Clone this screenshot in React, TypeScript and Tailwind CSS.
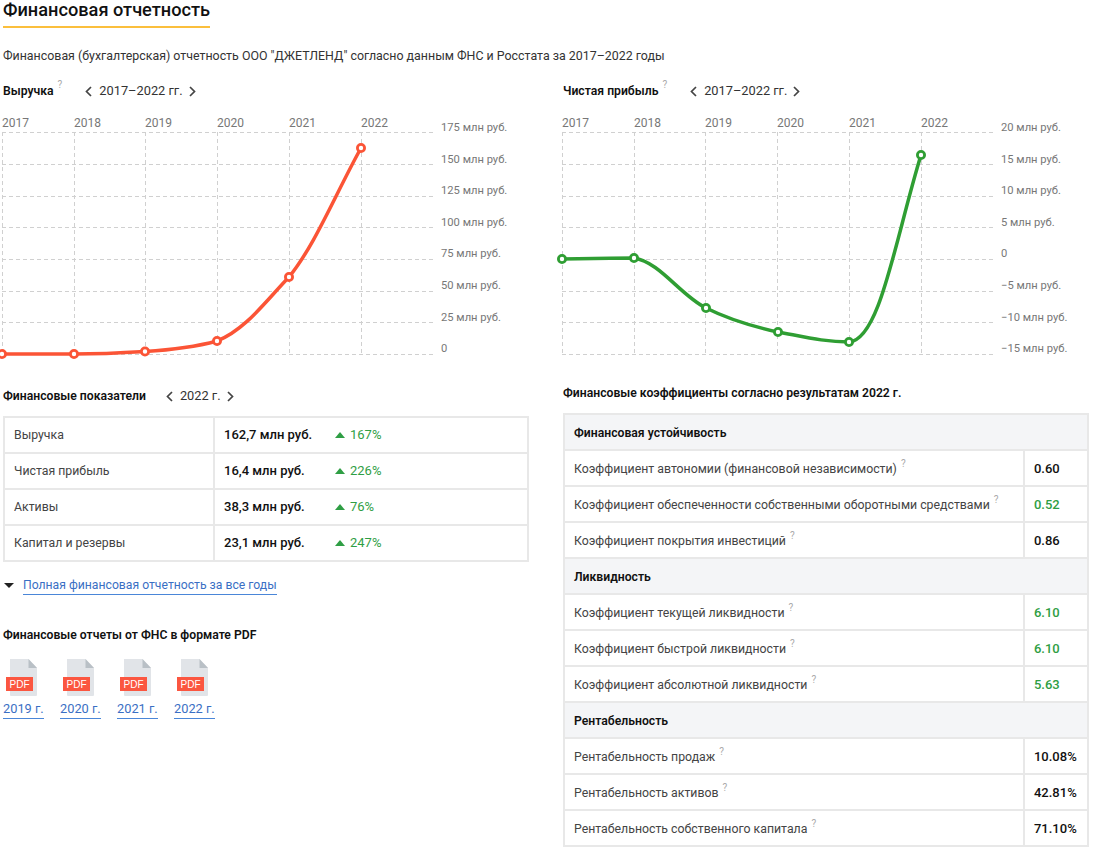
const font = { fontFamily: 'Roboto, sans-serif' }

const Q = () => <sup className="ml-1 text-[10px] font-normal text-[#aaa] top-[-6px]">?</sup>

function Chevron({ dir }: { dir: 'l' | 'r' }) {
  return (
    <svg width="7" height="11" viewBox="0 0 7 11" className={dir === 'l' ? 'mr-[7px]' : 'ml-[6px]'}>
      <path d={dir === 'l' ? 'M6 1 1.500 5.500 6 10' : 'M1 1l4.500 4.500L1 10'} fill="none" stroke="#444" strokeWidth="1.7" />
    </svg>
  )
}

function Switcher({ label }: { label: string }) {
  return (
    <div className="flex items-center text-[12.8px] text-[#333]">
      <Chevron dir="l" />
      <span>{label}</span>
      <Chevron dir="r" />
    </div>
  )
}

const years = ['2017', '2018', '2019', '2020', '2021', '2022']

function Chart({ labels, line, color, points }: { labels: string[]; line: string; color: string; points: number[][] }) {
  const xs = [2, 74, 145, 217, 289, 361]
  const ys = [132, 164, 196, 227, 259, 291, 322, 354]
  return (
    <svg width="526" height="240" viewBox="0 115 526 240" className="block overflow-visible">
      {xs.map((x) => (
        <line key={x} x1={x} x2={x} y1="132" y2="354" stroke="#d0d0d0" strokeDasharray="4 3" shapeRendering="crispEdges" />
      ))}
      {ys.map((y) => (
        <line key={y} x1="2" x2="433" y1={y} y2={y} stroke="#d0d0d0" strokeDasharray="4 3" shapeRendering="crispEdges" />
      ))}
      {years.map((y, i) => (
        <text key={y} x={xs[i]} y="127" fontSize="12" fill="#777">{y}</text>
      ))}
      {labels.map((l, i) => (
        <text key={l} x="441" y={131 + i * 31.6} fontSize="11.2" fill="#777">{l}</text>
      ))}
      <path d={line} fill="none" stroke={color} strokeWidth="3.5" />
      {points.map(([x, y]) => (
        <circle key={x} cx={x} cy={y} r="3.6" fill="#fff" stroke={color} strokeWidth="2.8" />
      ))}
    </svg>
  )
}

const revenue = [
  ['Выручка', '162,7 млн руб.', '167%'],
  ['Чистая прибыль', '16,4 млн руб.', '226%'],
  ['Активы', '38,3 млн руб.', '76%'],
  ['Капитал и резервы', '23,1 млн руб.', '247%'],
]

const ratios: { title: string; rows: [string, string, boolean][] }[] = [
  {
    title: 'Финансовая устойчивость',
    rows: [
      ['Коэффициент автономии (финансовой независимости)', '0.60', false],
      ['Коэффициент обеспеченности собственными оборотными средствами', '0.52', true],
      ['Коэффициент покрытия инвестиций', '0.86', false],
    ],
  },
  {
    title: 'Ликвидность',
    rows: [
      ['Коэффициент текущей ликвидности', '6.10', true],
      ['Коэффициент быстрой ликвидности', '6.10', true],
      ['Коэффициент абсолютной ликвидности', '5.63', true],
    ],
  },
  {
    title: 'Рентабельность',
    rows: [
      ['Рентабельность продаж', '10.08%', false],
      ['Рентабельность активов', '42.81%', false],
      ['Рентабельность собственного капитала', '71.10%', false],
    ],
  },
]

function PdfIcon() {
  return (
    <svg width="36" height="38" viewBox="0 0 36 38" className="block">
      <path d="M4 0h18.500L31 9v27a1 1 0 0 1-1 1H5a1 1 0 0 1-1-1z" fill="#e1e4e8" />
      <path d="M22.500 0 31 9h-8.500z" fill="#b9c0c6" />
      <rect x="0" y="18" width="27" height="14" fill="#fb5640" />
      <text x="13.500" y="28.700" textAnchor="middle" fontSize="10" fontFamily="Liberation Sans, sans-serif" fill="#fff">PDF</text>
    </svg>
  )
}

export default function App() {
  return (
    <div style={font} className="h-[854px] w-[1094px] overflow-hidden bg-white text-[12.3px] text-[#444]">
      <div className="pl-[3px]">
        <h1 className="inline-block border-b-2 border-[#fbbf3c] pb-[7px] text-[18.2px] leading-[19px] font-medium text-[#111]">Финансовая отчетность</h1>
      </div>
      <p className="mt-[20px] pl-[3px] text-[12.4px] leading-[16px] text-[#333]">Финансовая (бухгалтерская) отчетность ООО "ДЖЕТЛЕНД" согласно данным ФНС и Росстата за 2017–2022 годы</p>
      <div className="mt-[18px] grid grid-cols-[526px_526px] gap-x-[34px] pl-[3px]">
        <div>
          <div className="flex h-[18px] items-center">
            <b className="text-[12.2px] font-semibold text-[#111]">Выручка</b><Q />
            <div className="ml-[23px]"><Switcher label="2017–2022 гг." /></div>
          </div>
          <div className="-ml-[3px] mt-[15px]">
            <Chart
              color="#fb5436"
              labels={['175 млн руб.', '150 млн руб.', '125 млн руб.', '100 млн руб.', '75 млн руб.', '50 млн руб.', '25 млн руб.', '0']}
              line="M2 354C30 354 50 354 74 354C100 354 120 353 145 351.500C170 350 195 347 217 341C245 330 265 302 289 277C315 245 335 195 361 148"
              points={[[2, 354], [74, 354], [145, 351.500], [217, 341], [289, 277], [361, 148]]}
            />
          </div>
          <div className="mt-[32px] flex h-[18px] items-center">
            <b className="text-[12.2px] font-semibold text-[#111]">Финансовые показатели</b>
            <div className="ml-[20px]"><Switcher label="2022 г." /></div>
          </div>
          <table className="mt-[11px] w-[526px] table-fixed border-collapse border-2 border-[#e8e8e8]">
            <colgroup><col className="w-[210px]" /><col /></colgroup>
            <tbody>
              {revenue.map(([a, b, c]) => (
                <tr key={a} className="h-[36px] border-b-2 border-[#e8e8e8]">
                  <td className="border-r-2 border-[#e8e8e8] pl-[9px]">{a}</td>
                  <td>
                    <div className="flex items-center pl-[9px]">
                      <b className="w-[111px] text-[13px] font-medium text-[#111]">{b}</b>
                      <span className="mr-[5px] h-0 w-0 border-x-[5px] border-b-[6px] border-x-transparent border-b-[#2f9e44]" />
                      <span className="text-[13px] text-[#2f9e44]">{c}</span>
                    </div>
                  </td>
                </tr>
              ))}
            </tbody>
          </table>
          <div className="mt-[14px] flex items-center">
            <span className="ml-[1px] mr-[9px] h-0 w-0 border-x-[5px] border-t-[5px] border-x-transparent border-t-[#222]" />
            <a className="border-b border-[#4a86d8] text-[12.2px] text-[#3a6fc4]">Полная финансовая отчетность за все годы</a>
          </div>
          <div className="mt-[31px] text-[12.2px] font-semibold text-[#111]">Финансовые отчеты от ФНС в формате PDF</div>
          <div className="mt-[14px] flex gap-[16px]">
            {['2019 г.', '2020 г.', '2021 г.', '2022 г.'].map((y) => (
              <div key={y} className="w-[41px]">
                <div className="pl-[3px]"><PdfIcon /></div>
                <a className="mt-[2px] inline-block border-b border-[#4a86d8] text-[12.8px] whitespace-nowrap text-[#3a6fc4]">{y}</a>
              </div>
            ))}
          </div>
        </div>
        <div>
          <div className="flex h-[18px] items-center">
            <b className="text-[12.2px] font-semibold text-[#111]">Чистая прибыль</b><Q />
            <div className="ml-[23px]"><Switcher label="2017–2022 гг." /></div>
          </div>
          <div className="-ml-[3px] mt-[15px]">
            <Chart
              color="#2f9e33"
              labels={['20 млн руб.', '15 млн руб.', '10 млн руб.', '5 млн руб.', '0', '−5 млн руб.', '−10 млн руб.', '−15 млн руб.']}
              line="M2 259C25 258.500 50 258.500 74 258C100 262 120 295 146 308C170 320 195 327 218 332C245 337 265 342 289 342C320 340 335 240 361 155"
              points={[[2, 259], [74, 258], [146, 308], [218, 332], [289, 342], [361, 155]]}
            />
          </div>
          <div className="mt-[29px] flex h-[18px] items-center text-[12.2px] font-semibold text-[#111]">Финансовые коэффициенты согласно результатам 2022 г.</div>
          <table className="mt-[11px] w-[526px] table-fixed border-collapse border-2 border-[#e8e8e8]">
            <colgroup><col /><col className="w-[64px]" /></colgroup>
            <tbody>
              {ratios.map((g) => [
                <tr key={g.title} className="h-[36px] border-b-2 border-[#e8e8e8] bg-[#f4f5f7]">
                  <td colSpan={2} className="pt-[2px] pl-[9px] text-[12.2px] font-semibold text-[#111]">{g.title}</td>
                </tr>,
                ...g.rows.map(([n, v, good]) => (
                  <tr key={n} className="h-[36px] border-b-2 border-[#e8e8e8]">
                    <td className="pt-[2px] pl-[9px]">{n}<Q /></td>
                    <td className={`border-l-2 border-[#e8e8e8] pt-[2px] pl-[9px] text-[13px] font-medium ${good ? 'text-[#2f9e44]' : 'text-[#111]'}`}>{v}</td>
                  </tr>
                )),
              ])}
            </tbody>
          </table>
        </div>
      </div>
    </div>
  )
}
